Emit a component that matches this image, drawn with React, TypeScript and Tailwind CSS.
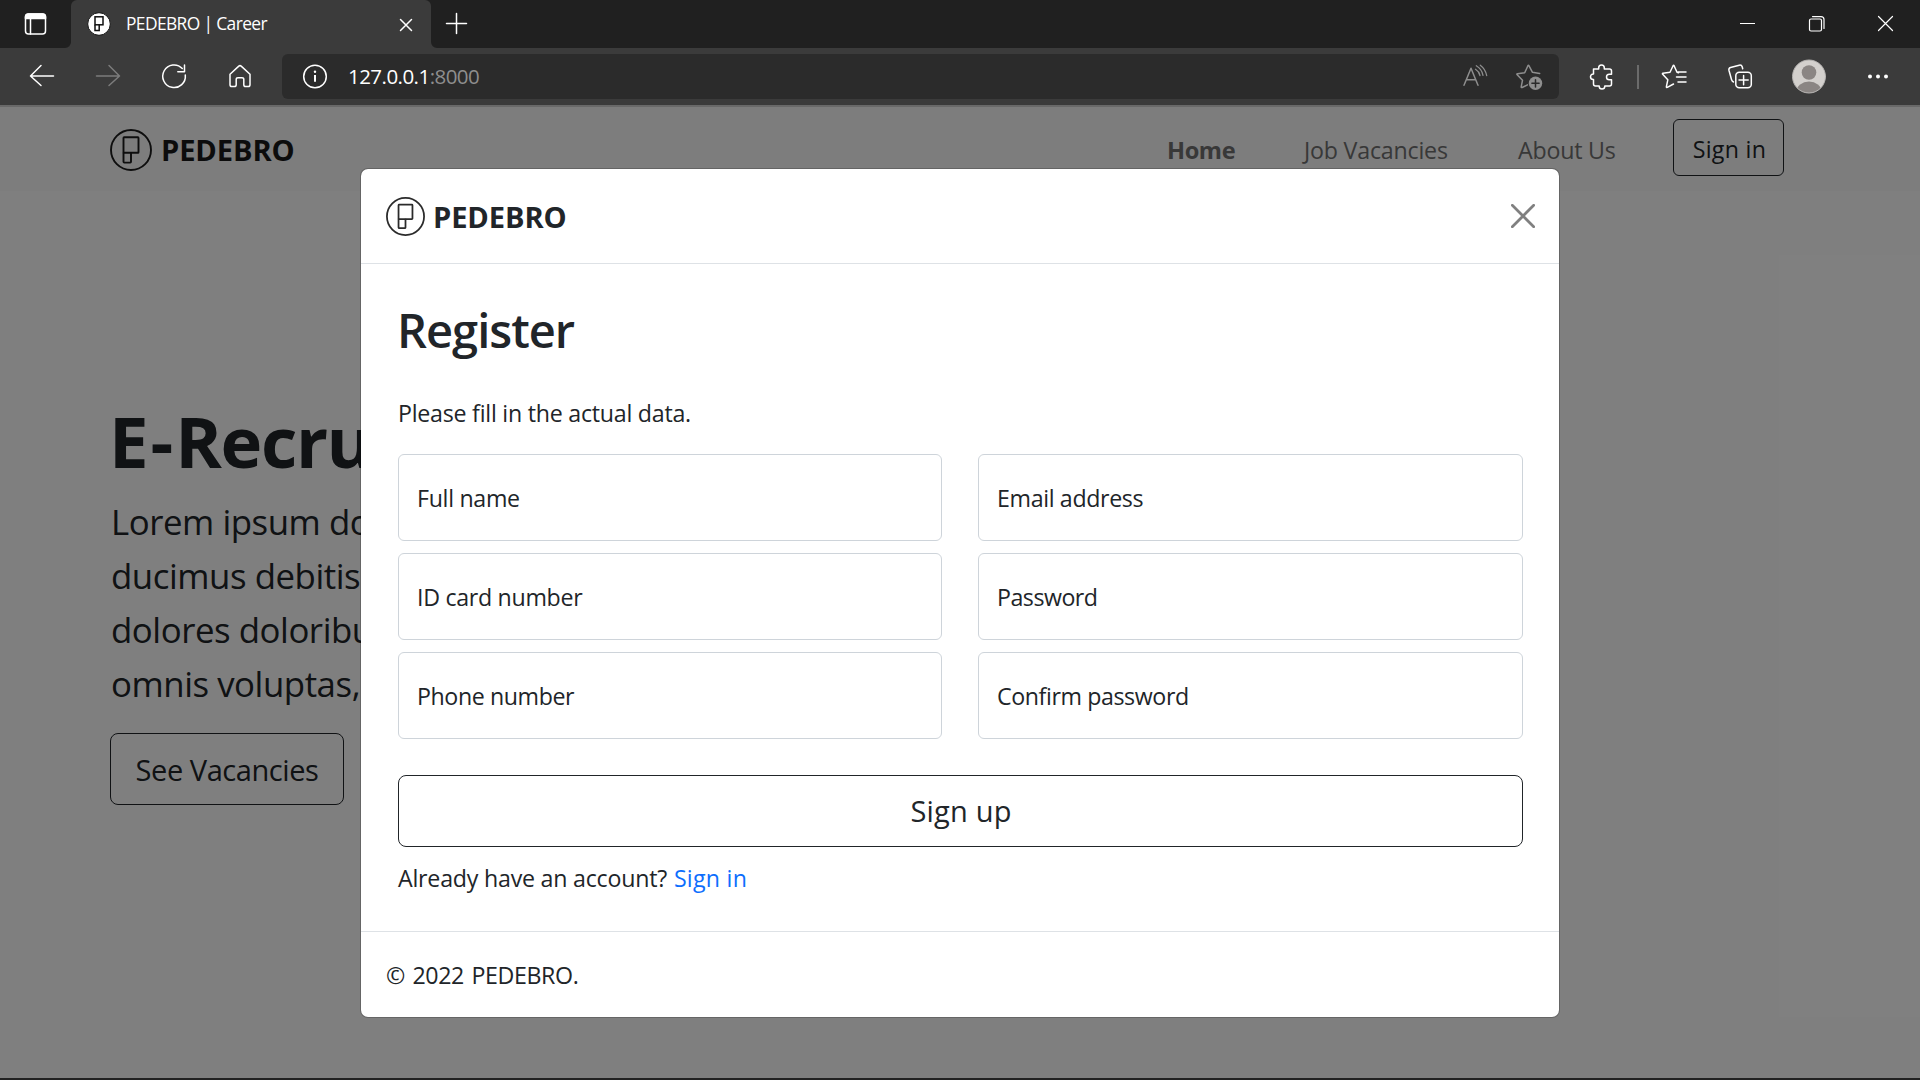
import React from "react";

type GlyphProps = { w: number; h?: number; children: React.ReactNode; className?: string };

/* Icon cell whose drawing origin is the centre of the cell. */
function Glyph({ w, h = 57, children, className = "" }: GlyphProps) {
  return (
    <svg
      width={w}
      height={h}
      viewBox={`${-w / 2} ${-h / 2} ${w} ${h}`}
      fill="none"
      stroke="#ffffff"
      strokeWidth={1.5}
      strokeLinecap="round"
      strokeLinejoin="round"
      className={`shrink-0 ${className}`}
    >
      {children}
    </svg>
  );
}

function Logo({ size, color }: { size: number; color: string }) {
  return (
    <svg width={size} height={size} viewBox="0 0 42 42" fill="none" stroke={color} strokeWidth={1.9} className="shrink-0">
      <circle cx="21" cy="21" r="20" />
      <rect x="13.500" y="8.300" width="15" height="15.500" rx="0.600" />
      <path d="M13.500 23.500v9.300q0 .8.8.8h5.900q.8 0 .8-.8V23.500" />
    </svg>
  );
}

function TabStrip() {
  return (
    <div className="flex h-12 bg-[#202020]">
      <Glyph w={71} h={48}>
        <rect x="-10" y="-10" width="20" height="20" rx="3" />
        <path d="M-10-5.500v-1.500a3 3 0 0 1 3-3h14a3 3 0 0 1 3 3v1.500z" fill="#fff" />
        <path d="M-5-5v15" />
      </Glyph>
      <div className="relative flex h-12 w-[360px] items-center rounded-t-[6px] bg-[#3b3b3b]">
        <svg width="6" height="6" viewBox="0 0 6 6" className="absolute bottom-0 -left-[6px]">
          <path d="M6 0v6H0a6 6 0 0 0 6-6z" fill="#3b3b3b" />
        </svg>
        <svg width="6" height="6" viewBox="0 0 6 6" className="absolute -right-[6px] bottom-0">
          <path d="M0 0v6h6a6 6 0 0 1-6-6z" fill="#3b3b3b" />
        </svg>
        <svg width="24" height="24" viewBox="0 0 24 24" fill="none" stroke="#111" strokeWidth="1.500" className="ml-4 shrink-0">
          <circle cx="12" cy="12" r="11.300" fill="#fff" strokeWidth="1" />
          <rect x="8" y="4.800" width="8" height="8" />
          <path d="M8 12.800v5.700h4.200v-5.700" />
        </svg>
        <span className="ml-[15px] flex-1 pb-[2px] text-[17.4px] tracking-[-0.62px] text-white">PEDEBRO | Career</span>
        <Glyph w={50} h={48}>
          <path d="M-5.500-4.500l11 11M5.500-4.500l-11 11" />
        </Glyph>
      </div>
      <Glyph w={51} h={48}>
        <path d="M-10-.5h20M0-10.500v20" />
      </Glyph>
      <div className="flex-1" />
      <Glyph w={69} h={48}>
        <path d="M-7.500-.5h15" strokeWidth={1} strokeLinecap="butt" />
      </Glyph>
      <Glyph w={69} h={48}>
        <rect x="-7" y="-5" width="12" height="12" rx="1.500" strokeWidth={1.200} />
        <path d="M-4-7.400h8.500a3 3 0 0 1 3 3V4.500" strokeWidth={1.200} />
      </Glyph>
      <Glyph w={69} h={48}>
        <path d="M-7-7.500l14 14M7-7.500l-14 14" strokeWidth={1.200} />
      </Glyph>
    </div>
  );
}

function Toolbar() {
  return (
    <div className="flex h-[57px] items-center bg-[#3b3b3b] pl-[9px]">
      <Glyph w={66}>
        <path d="M11.500-.5h-23M-1-11l-10.500 10.500L-1 9" />
      </Glyph>
      <Glyph w={66}>
        <path d="M-11.500-.5h23M1-11l10.500 10.500L1 9" stroke="#7c7c7c" />
      </Glyph>
      <Glyph w={66}>
        <path d="M11.300-1.500a11.300 11.300 0 1 1-3-6.500M10.500-11.500v6.700h-6.700" />
      </Glyph>
      <Glyph w={66}>
        <path d="M-10-2.300L-1.200-10.400q1.200-1 2.400 0L10-2.300V8.200q0 1.800-1.800 1.800H5.600q-1.800 0-1.800-1.800V2.900Q3.800 1.200 2 1.200h-4q-1.800 0-1.800 1.700V8.200q0 1.800-1.800 1.800h-2.600q-1.800 0-1.800-1.800z" />
      </Glyph>
      <div className="ml-[9px] flex h-[45px] w-[1277px] items-center rounded-[6px] bg-[#2b2b2b]">
        <Glyph w={66} h={45}>
          <circle r="11.300" />
          <path d="M0-1.500V5.200" strokeWidth={2} strokeLinecap="butt" />
          <circle cy="-4.800" r="1.200" fill="#fff" stroke="none" />
        </Glyph>
        <span className="flex-1 text-[20.5px] tracking-[-0.54px] text-white">
          127.0.0.1<span className="text-[#8e8e8e]">:8000</span>
        </span>
        <Glyph w={51} h={45}>
          <g stroke="#8e8e8e">
            <path d="M-11.500 8.700L-4.500-8.300L2.500 8.700M-9.300 3.300h9.600" />
            <path d="M0-7.200a10 10 0 0 1 4.500 6.200M.8-10.700a14 14 0 0 1 6.700 9.500M4.800-11.300a17 17 0 0 1 6.400 10.300" strokeWidth={1.300} />
          </g>
        </Glyph>
        <Glyph w={58} h={45}>
          <path
            d="M9.700-3l-7.200-1.200L-1.100-10.800q-.5-.9-1 0L-5.300-3.800l-7.200 1q-1.100.2-.3 1L-7.500 3.800l-1.300 6.500q-.1 1.100.9.700L-2.500 8.300"
            stroke="#8e8e8e"
          />
          <circle cx="5.500" cy="6.800" r="6.700" fill="#8e8e8e" stroke="none" />
          <path d="M5.500 3.200v7.200M1.900 6.800h7.200" stroke="#2b2b2b" />
        </Glyph>
      </div>
      <Glyph w={67} className="ml-[9px]">
        <path d="M-8-7.500h5.200v-1.200a2.800 2.800 0 0 1 5.600 0v1.200H8q2 0 2 2v3.200h-2.200a2.800 2.800 0 0 0 0 5.600H10V7.500q0 2-2 2H3.300v.3a2.800 2.800 0 0 1-5.600 0v-.3H-6q-2 0-2-2V3h-.2a2.800 2.800 0 0 1 0-5.600H-8z" />
      </Glyph>
      <div className="mx-[2px] h-6 w-[2px] bg-[#6b6b6b]" />
      <Glyph w={66}>
        <path d="M4.500-3.800L3-4.300L.1-10.800q-.5-.9-1 0L-4-4.200l-7 1q-1 .2-.3 1L-6.200 3.300l-1.400 6.900q-.1 1.100.9.700L-.5 7.500M4-4.500h8M2.500.5h9.500M4 5.500h8" />
      </Glyph>
      <Glyph w={66}>
        <rect x="-4.200" y="-4.200" width="15.500" height="15.500" rx="3.500" />
        <path d="M3.600-1v9.200M-1 3.600h9.200M-6.500 5.500q-1.500-.7-2-2.500L-11-6q-.6-2.400 1.500-3l8.700-2.300q2.300-.5 3 1.500l.5 2" />
      </Glyph>
      <Glyph w={72}>
        <clipPath id="avatar">
          <circle r="16.500" />
        </clipPath>
        <g clipPath="url(#avatar)" stroke="none">
          <circle r="17" fill="#d3d0cd" />
          <circle cy="-4" r="7.300" fill="#8a8583" />
          <ellipse cy="15" rx="12.500" ry="10" fill="#8a8583" />
        </g>
        <circle r="16.500" stroke="#b5b3b1" strokeWidth={1} />
      </Glyph>
      <Glyph w={66}>
        <g fill="#fff" stroke="none">
          <circle cx="-8" r="2" />
          <circle r="2" />
          <circle cx="8" r="2" />
        </g>
      </Glyph>
    </div>
  );
}

function Navbar() {
  return (
    <nav className="flex h-[86px] items-center border-t-2 border-[#d2d2d2] bg-[#fafafa] pt-[2px] pr-[136px] pl-[110px] text-[23.2px] text-[#707070]">
      <Logo size={42} color="#1c1c1c" />
      <span className="ml-[9px] flex-1 pt-[2px] text-[29.1px] font-bold tracking-[-0.1px] text-[#191919]">PEDEBRO</span>
      <span className="w-[137px] pt-[2px] text-[23.6px] font-bold tracking-[-0.4px]">Home</span>
      <span className="w-[214px] tracking-[-0.2px]">Job Vacancies</span>
      <span className="w-[155px] tracking-[-0.2px]">About Us</span>
      <button className="-mt-[5px] h-[57px] w-[111px] rounded-[6px] border border-[#212529] pt-[3px] pl-[2px] tracking-[0.3px] text-[#212529]">
        Sign in
      </button>
    </nav>
  );
}

const leadLines = ["Lorem ipsum do", "ducimus debitis", "dolores doloribu", "omnis voluptas,"];

function Hero() {
  return (
    <section className="flex w-[361px] flex-col items-start overflow-hidden pt-[207px] pl-[110px] whitespace-nowrap text-[#212529]">
      <h1 className="-ml-px text-[70.7px] leading-[86px] font-bold tracking-[-1.4px]">
        <span className="tracking-[2px]">E-</span>Recru
      </h1>
      <p className="mt-[11px] ml-px text-[34.8px] leading-[54px] tracking-[-0.45px]">
        {leadLines.map((line) => (
          <span key={line} className="block">
            {line}
          </span>
        ))}
      </p>
      <button className="mt-[22px] h-[72px] w-[234px] rounded-[8px] border border-[#212529] pt-[2px] text-[29px] tracking-[-0.44px]">
        See Vacancies
      </button>
    </section>
  );
}

const fields = [
  { label: "Full name", spacing: "tracking-[-0.3px]" },
  { label: "Email address", spacing: "tracking-[-0.35px]" },
  { label: "ID card number", spacing: "tracking-[-0.3px]" },
  { label: "Password", spacing: "tracking-[-0.5px]" },
  { label: "Phone number", spacing: "tracking-[-0.4px]" },
  { label: "Confirm password", spacing: "tracking-[-0.4px]" },
];

function RegisterModal() {
  return (
    <div className="absolute top-[63px] left-[360px] flex h-[850px] w-[1200px] flex-col rounded-[8px] border border-black/20 bg-white bg-clip-padding text-[23.2px] text-[#212529]">
      <header className="flex h-[95px] items-center border-b border-[#dee2e6] pr-[24px] pl-[25px]">
        <Logo size={39} color="#2b2b2b" />
        <span className="ml-[8px] flex-1 pt-[3px] text-[29.1px] font-bold tracking-[-0.1px]">PEDEBRO</span>
        <Glyph w={24} h={24}>
          <path d="M-10.700-10.700l21.400 21.400M10.700-10.700l-21.400 21.400" stroke="#808080" strokeWidth={2.700} />
        </Glyph>
      </header>
      <div className="flex-1 pt-[38px] pr-[36px] pl-[37px]">
        <h2 className="-ml-px text-[47px] leading-[56px] font-semibold tracking-[-1px]">Register</h2>
        <p className="mt-[37px] leading-9 tracking-[-0.24px]">Please fill in the actual data.</p>
        <div className="mt-[23px] grid grid-cols-[544px_545px] gap-x-9 gap-y-3">
          {fields.map((f) => (
            <div key={f.label} className="flex h-[87px] items-center rounded-[6px] border border-[#ced4da] pt-[2px] pl-[18px]">
              <span className={f.spacing}>{f.label}</span>
            </div>
          ))}
        </div>
        <button className="mt-9 h-[72px] w-full rounded-[8px] border border-[#212529] pl-px text-[29px] tracking-[0.2px]">Sign up</button>
        <p className="mt-[13px] leading-9 tracking-[-0.22px]">
          Already have an account? <a className="ml-px tracking-[0.25px] text-[#0d6efd]">Sign in</a>
        </p>
      </div>
      <footer className="flex h-[86px] items-center border-t border-[#dee2e6] pt-[2px] pl-[25px] tracking-[-0.4px] [word-spacing:2px]">
        © 2022 PEDEBRO.
      </footer>
    </div>
  );
}

export default function App() {
  return (
    <div className="flex h-[1080px] w-[1920px] flex-col overflow-hidden bg-[#222222] font-['Open_Sans',sans-serif]">
      <TabStrip />
      <Toolbar />
      <main className="relative h-[973px] overflow-hidden bg-white">
        <Navbar />
        <Hero />
        <div className="absolute inset-0 bg-black/50" />
        <RegisterModal />
      </main>
    </div>
  );
}
